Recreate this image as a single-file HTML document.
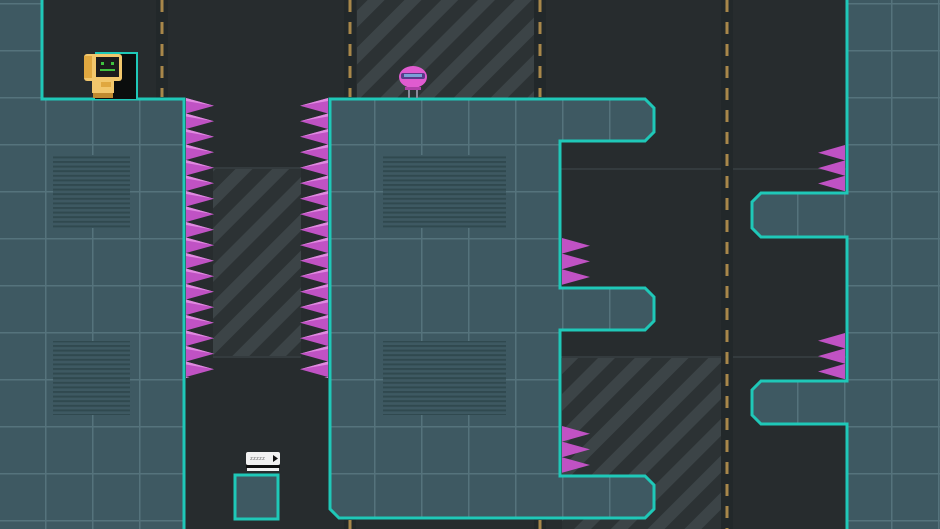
<!DOCTYPE html>
<html><head><meta charset="utf-8"><style>
html,body{margin:0;padding:0;background:#272c2e;width:940px;height:529px;overflow:hidden}
svg{display:block}
</style></head><body>
<svg width="940" height="529" viewBox="0 0 940 529" xmlns="http://www.w3.org/2000/svg">
<defs>
<pattern id="tile" x="45" y="3" width="47" height="47" patternUnits="userSpaceOnUse">
<rect width="47" height="47" fill="#3e5962"/>
<rect x="0" y="0" width="47" height="1.5" fill="#55737c"/>
<rect x="0" y="0" width="1.5" height="47" fill="#55737c"/>
</pattern>
<pattern id="haz" width="26" height="26" patternUnits="userSpaceOnUse" patternTransform="rotate(45)">
<rect width="26" height="26" fill="#2c3234"/>
<rect width="12" height="26" fill="#3c4447"/>
</pattern>
<pattern id="vent" width="10" height="4.6" patternUnits="userSpaceOnUse">
<rect width="10" height="4.6" fill="#3e5962"/>
<rect width="10" height="2" fill="#30494f"/>
</pattern>
<pattern id="spR1" x="186" y="98" width="28" height="15.5" patternUnits="userSpaceOnUse">
<polygon points="0,0 28,7.7 0,15.5" fill="#c052c4"/>
<polygon points="0,0 28,7.7 0,3" fill="#e08ae0"/>
</pattern>
<pattern id="spL1" x="300" y="98" width="28" height="15.5" patternUnits="userSpaceOnUse">
<polygon points="28,0 0,7.7 28,15.5" fill="#c052c4"/>
<polygon points="28,0 0,7.7 28,3" fill="#e08ae0"/>
</pattern>
</defs>

<rect x="357" y="0" width="180" height="99" fill="url(#haz)"/>
<rect x="213" y="168" width="88" height="189" fill="url(#haz)"/>
<rect x="562" y="357" width="160" height="172" fill="url(#haz)"/>
<rect x="560" y="168" width="287" height="2" fill="#343b3e"/>
<rect x="213" y="167" width="88" height="2" fill="#343b3e"/>
<rect x="213" y="356" width="88" height="2" fill="#343b3e"/>
<rect x="560" y="356" width="287" height="2" fill="#343b3e"/>
<g fill="#22282a">
<rect x="156" y="0" width="12" height="98"/>
<rect x="344" y="0" width="12" height="99"/>
<rect x="534" y="0" width="12" height="529"/>
<rect x="721" y="0" width="12" height="529"/>
<rect x="344" y="518" width="12" height="11"/>
</g>
<g stroke="#a8874a" stroke-width="3" stroke-dasharray="12,10">
<line x1="162" y1="0" x2="162" y2="97"/>
<line x1="350" y1="0" x2="350" y2="97"/>
<line x1="540" y1="0" x2="540" y2="97"/>
<line x1="540" y1="520" x2="540" y2="529"/>
<line x1="727" y1="0" x2="727" y2="529"/>
<line x1="350" y1="520" x2="350" y2="529"/>
</g>

<path d="M0,0 H42 V99 H184 V529 H0 Z" fill="url(#tile)"/>
<path d="M42,0 V99 H184 V529" fill="none" stroke="#1fc8b8" stroke-width="3"/>
<rect x="53" y="155" width="77" height="73" fill="url(#vent)"/>
<rect x="53" y="341" width="77" height="74" fill="url(#vent)"/>

<rect x="186" y="98" width="28" height="280" fill="url(#spR1)"/>
<rect x="300" y="98" width="28" height="280" fill="url(#spL1)"/>
<g fill="#c052c4">
<polygon points="562,238 590,245.8 562,253.6"/><polygon points="562,253.6 590,261.4 562,269.2"/><polygon points="562,269.2 590,277 562,284.8"/>
<polygon points="562,426 590,433.8 562,441.6"/><polygon points="562,441.6 590,449.4 562,457.2"/><polygon points="562,457.2 590,465 562,472.8"/>
<polygon points="845,145 818,152.7 845,160.4"/><polygon points="845,160.4 818,168.1 845,175.8"/><polygon points="845,175.8 818,183.5 845,191.2"/>
<polygon points="845,333 818,340.7 845,348.4"/><polygon points="845,348.4 818,356.1 845,363.8"/><polygon points="845,363.8 818,371.5 845,379.2"/>
</g>

<path d="M330,99 H645 L654,108 V132 L645,141 H560 V288 H645 L654,297 V321 L645,330 H560 V476 H645 L654,485 V509 L645,518 H339 L330,509 Z" fill="url(#tile)" stroke="#1fc8b8" stroke-width="3"/>
<rect x="383" y="155" width="123" height="73" fill="url(#vent)"/>
<rect x="383" y="341" width="123" height="74" fill="url(#vent)"/>

<path d="M847,0 V193 H761 L752,202 V228 L761,237 H847 V381 H761 L752,390 V415 L761,424 H847 V529 H940 V0 Z" fill="url(#tile)"/>
<path d="M847,0 V193 H761 L752,202 V228 L761,237 H847 V381 H761 L752,390 V415 L761,424 H847 V529" fill="none" stroke="#1fc8b8" stroke-width="3"/>

<rect x="235" y="475" width="43" height="44" fill="#3e5962" stroke="#1fc8b8" stroke-width="3"/>
<rect x="246" y="452" width="34" height="13" rx="2" fill="#f2f2f2"/>
<rect x="246" y="465" width="34" height="3" fill="#111"/>
<rect x="247" y="468" width="32" height="3" fill="#f2f2f2"/>
<polygon points="273,455 278,458.5 273,462" fill="#111"/>
<text x="250" y="460" font-family="Liberation Mono, monospace" font-size="5" fill="#666">zzzzz</text>

<rect x="95" y="53" width="42" height="46" fill="#0b0d0d"/>
<path d="M95,53 H137 V99" fill="none" stroke="#1fc8b8" stroke-width="2"/>
<rect x="84" y="54" width="38" height="27" rx="3" fill="#f2c76c"/>
<rect x="84" y="56" width="8" height="22" fill="#e0a840"/>
<rect x="96" y="57" width="23" height="20" fill="#1c1c1c"/>
<rect x="101" y="62" width="3" height="3" fill="#3fc23f"/>
<rect x="111" y="62" width="3" height="3" fill="#3fc23f"/>
<rect x="100" y="69" width="15" height="2" fill="#3fc23f"/>
<rect x="92" y="81" width="22" height="12" fill="#f2c76c"/>
<rect x="101" y="82" width="10" height="5" fill="#e0a840"/>
<rect x="93" y="93" width="20" height="5" fill="#c08a30"/>

<ellipse cx="413" cy="77" rx="14" ry="11" fill="#e05bd0"/>
<rect x="401" y="73" width="24" height="6" rx="2" fill="#5a3a8a"/>
<rect x="404" y="74" width="18" height="3" fill="#7aa0d8"/>
<rect x="405" y="87" width="16" height="3" fill="#b040a8"/>
<rect x="408" y="90" width="2" height="8" fill="#8a8a9a"/>
<rect x="416" y="90" width="2" height="8" fill="#8a8a9a"/>
</svg>
</body></html>
